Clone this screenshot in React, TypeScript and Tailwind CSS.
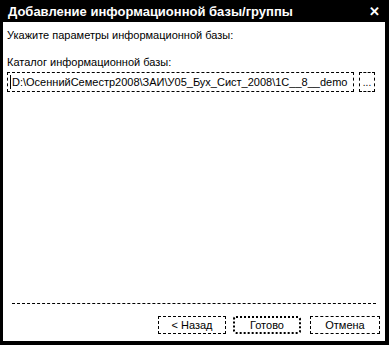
import React from 'react';

export default function App() {
  return (
    <div className="w-[389px] h-[345px] bg-black flex flex-col pl-[3px] pr-[4px] pb-[4px] font-['Liberation_Sans',Arial,sans-serif]">
      {/* Title bar */}
      <div className="h-[22px] flex items-center justify-between pl-[5px] pr-[5px] text-white">
        <span className="text-[13px] font-bold leading-none">Добавление информационной базы/группы</span>
        <span className="text-[13px] font-bold leading-none">✕</span>
      </div>

      {/* Body */}
      <div className="flex-1 bg-white flex flex-col text-black text-[11px] leading-[14px]">
        <div className="pt-[6px] pl-[4px]">Укажите параметры информационной базы:</div>

        <div className="pt-[13px] pl-[4px]">Каталог информационной базы:</div>

        <div className="mt-[3px] flex items-center gap-[5px] pl-[4px] pr-[10px]">
          <div className="flex-1 h-[20px] border border-dashed border-black flex items-center pl-[2px]">
            <span className="border-l border-black pl-[1px] whitespace-nowrap">
              D:\ОсеннийСеместр2008\ЗАИ\У05_Бух_Сист_2008\1C__8__demo
            </span>
          </div>
          <div className="w-[16px] h-[20px] border border-dashed border-black flex items-end justify-center pb-[3px] text-[10px] leading-none">
            ...
          </div>
        </div>

        <div className="flex-1" />

        {/* Separator */}
        <div className="mx-[9px] border-t border-dashed border-black" />

        {/* Buttons */}
        <div className="flex justify-end pr-[5px] pt-[12px] pb-[7px]">
          <button className="w-[68px] h-[18px] border border-dashed border-black flex items-center justify-center leading-none">
            &lt; Назад
          </button>
          <button className="ml-[7px] w-[68px] h-[18px] border-2 border-dotted border-black rounded-[3px] flex items-center justify-center leading-none">
            Готово
          </button>
          <button className="ml-[9px] w-[70px] h-[18px] border border-dashed border-black flex items-center justify-center leading-none">
            Отмена
          </button>
        </div>
      </div>
    </div>
  );
}
